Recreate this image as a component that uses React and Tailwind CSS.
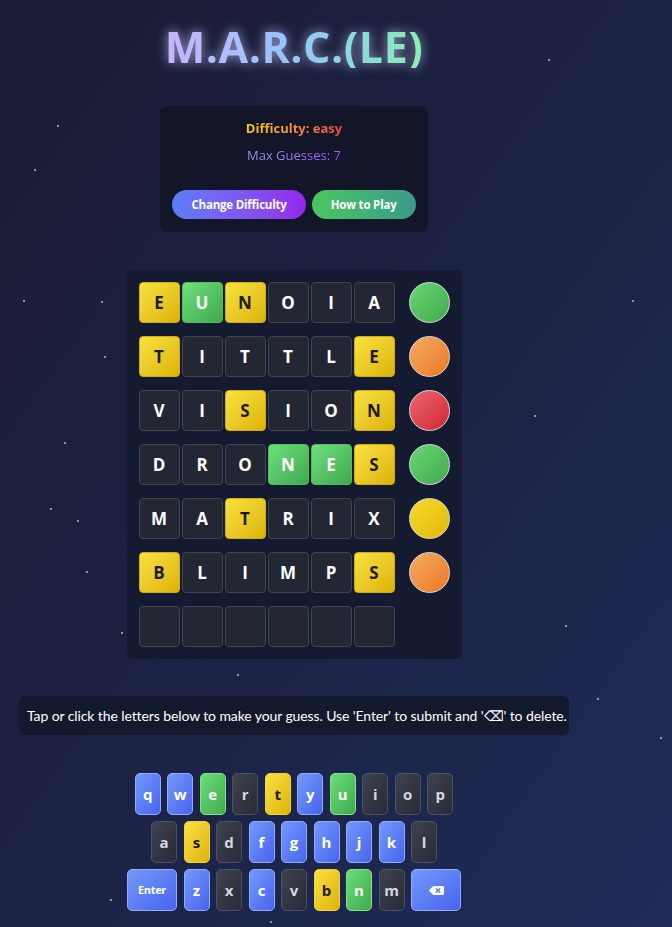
import React from 'react';
import { FaBackspace } from 'react-icons/fa';

const font = { fontFamily: '"Open Sans", "Noto Sans", sans-serif' };

const stars = [
  [548, 59], [57, 125], [34, 169], [23, 300], [101, 301], [104, 356], [64, 442], [534, 415],
  [50, 508], [77, 520], [86, 571], [121, 632], [237, 674], [565, 625], [597, 698], [150, 880],
  [110, 899], [270, 921], [660, 737], [632, 300],
];

const rows = [
  { word: 'EUNOIA', marks: 'ygyddd', dot: 'green' },
  { word: 'TITTLE', marks: 'yddddy', dot: 'orange' },
  { word: 'VISION', marks: 'ddyddy', dot: 'red' },
  { word: 'DRONES', marks: 'dddggy', dot: 'green' },
  { word: 'MATRIX', marks: 'ddyddd', dot: 'yellow' },
  { word: 'BLIMPS', marks: 'yddddy', dot: 'orange' },
  { word: '      ', marks: 'dddddd', dot: null },
];

const tileCls = {
  y: 'bg-gradient-to-br from-[#f8e23f] to-[#ddb300] border-[#d4ae08] text-[#1c1c1c]',
  g: 'bg-gradient-to-br from-[#6fe17f] to-[#40a84b] border-[#4fbf5b] text-white',
  d: 'bg-[#222733] border-[#3f4553] text-white',
};

const dotCls = {
  green: 'from-[#67d874] to-[#43a94c]',
  orange: 'from-[#f4aa62] to-[#ea7818]',
  red: 'from-[#ea6470] to-[#d2202f]',
  yellow: 'from-[#f6dc2c] to-[#e1b600]',
};

const keyCls = {
  b: 'bg-gradient-to-br from-[#7399fb] to-[#4a62ee] border-[#92aefb] text-white',
  g: 'bg-gradient-to-br from-[#6bdf7b] to-[#41a94c] border-[#7fe58d] text-white',
  y: 'bg-gradient-to-br from-[#f8e23f] to-[#ddb300] border-[#f3d53a] text-[#1c1c1c]',
  d: 'bg-gradient-to-br from-[#3e434f] to-[#262b36] border-[#4c5260] text-[#d5d8de]',
};

const kb = [
  [['q', 'b'], ['w', 'b'], ['e', 'g'], ['r', 'd'], ['t', 'y'], ['y', 'b'], ['u', 'g'], ['i', 'd'], ['o', 'd'], ['p', 'd']],
  [['a', 'd'], ['s', 'y'], ['d', 'd'], ['f', 'b'], ['g', 'b'], ['h', 'b'], ['j', 'b'], ['k', 'b'], ['l', 'd']],
  [['Enter', 'b'], ['z', 'b'], ['x', 'd'], ['c', 'b'], ['v', 'd'], ['b', 'y'], ['n', 'g'], ['m', 'd'], ['back', 'b']],
];

function Key({ k, s }) {
  const wide = k === 'Enter' || k === 'back';
  return (
    <button className={`${wide ? 'w-[50px]' : 'w-[26px]'} h-[42px] rounded-[5px] border flex items-center justify-center font-bold ${keyCls[s]} ${k === 'Enter' ? 'text-[11px] tracking-[-0.3px]' : 'text-[15px]'}`}>
      {k === 'back' ? <FaBackspace size={15} /> : k}
    </button>
  );
}

export default function App() {
  return (
    <div className="relative min-h-screen overflow-hidden bg-gradient-to-br from-[#1b1b35] via-[#1c2244] to-[#1e2c58]" style={font}>
      {stars.map(([x, y], i) => (
        <span key={i} className="absolute w-[2px] h-[2px] rounded-full bg-white/70" style={{ left: x, top: y }} />
      ))}
      <div className="relative w-[588px] flex flex-col items-center pt-[25px] pb-4">
        <h1 className="text-[43px] leading-none font-bold tracking-[0.5px] bg-gradient-to-r from-[#c7b4fd] via-[#93c5fd] to-[#86efac] bg-clip-text text-transparent drop-shadow-[0_0_6px_rgba(200,210,255,0.75)]">
          M.A.R.C.(LE)
        </h1>

        <div className="mt-[38px] bg-[#121628] rounded-lg px-3 pt-[13px] pb-[13px] flex flex-col items-center">
          <p className="text-[13px] font-bold leading-[18px] bg-gradient-to-r from-[#facc15] to-[#ef4444] bg-clip-text text-transparent">Difficulty: easy</p>
          <p className="mt-[9px] text-[13px] leading-[18px] bg-gradient-to-r from-[#8b9cf0] to-[#a855f7] bg-clip-text text-transparent">Max Guesses: 7</p>
          <div className="mt-[26px] flex gap-[6px]">
            <button className="h-[29px] px-[19px] rounded-full bg-gradient-to-r from-[#5b7cf7] to-[#9225ea] text-white text-[11.5px] tracking-[-0.2px] font-bold">Change Difficulty</button>
            <button className="h-[29px] px-[19px] rounded-full bg-gradient-to-r from-[#4cc75d] to-[#3a9a8a] text-white text-[11.5px] tracking-[-0.2px] font-bold">How to Play</button>
          </div>
        </div>

        <div className="mt-[38px] bg-[#141a30] rounded-md p-3 flex flex-col gap-[13px]">
          {rows.map((r, ri) => (
            <div key={ri} className="flex items-center gap-[14px]">
              <div className="flex gap-[2px]">
                {r.word.split('').map((ch, ci) => (
                  <div key={ci} className={`w-[41px] h-[41px] rounded-[4px] border flex items-center justify-center text-[17px] font-bold ${tileCls[r.marks[ci]]}`}>
                    {ch.trim()}
                  </div>
                ))}
              </div>
              {r.dot ? (
                <div className={`w-[41px] h-[41px] rounded-full border-[1.5px] border-[#d9d9e0] bg-gradient-to-br ${dotCls[r.dot]}`} />
              ) : (
                <div className="w-[41px] h-[41px]" />
              )}
            </div>
          ))}
        </div>

        <div className="mt-[37px] w-[550px] bg-[#131a2e] rounded-md px-[8px] py-[10px] text-white text-[14px] leading-[19px] text-center whitespace-nowrap tracking-[-0.1px]" style={{ fontFamily: 'Lato, "Open Sans", sans-serif' }}>
          Tap or click the letters below to make your guess. Use 'Enter' to submit and '⌫' to delete.
        </div>

        <div className="mt-[38px] flex flex-col items-center gap-[6px]">
          {kb.map((row, i) => (
            <div key={i} className="flex gap-[6.5px]">
              {row.map(([k, s]) => <Key key={k} k={k} s={s} />)}
            </div>
          ))}
        </div>
      </div>
    </div>
  );
}
